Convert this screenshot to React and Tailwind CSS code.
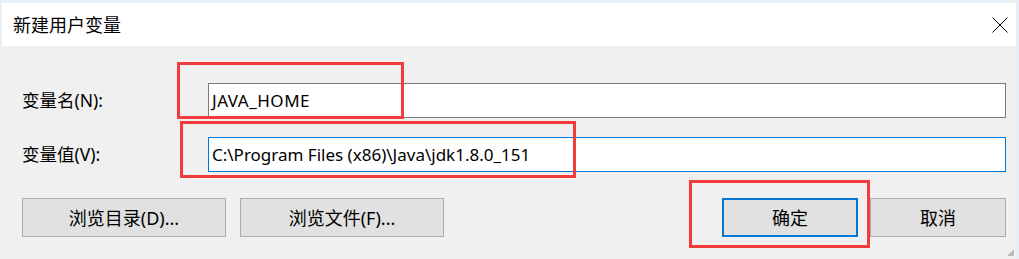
export default function App() {
  const font = { fontFamily: '"Noto Sans", "Noto Sans CJK SC", sans-serif' };
  return (
    <div className="relative w-[1019px] h-[259px] bg-[#e9eff7] overflow-hidden" style={font}>
      <div className="absolute left-[2px] top-[3px] right-[3px] bottom-0 flex flex-col">
        {/* title bar */}
        <div className="h-[43px] bg-white flex items-center justify-between pl-[11px] pr-[7px]">
          <span className="text-[18px] text-black leading-none">新建用户变量</span>
          <svg width="16" height="16" viewBox="0 0 16 16" className="mr-[1px]">
            <path d="M0.5 0.5 L15.5 15.5 M15.5 0.5 L0.5 15.5" stroke="#000" strokeWidth="1" fill="none" />
          </svg>
        </div>
        {/* body */}
        <div className="flex-1 bg-[#f0f0f0] relative flex flex-col pl-[20px] pr-[10px] pt-[37px] text-[17px] text-black">
          <div className="flex items-center h-[35px]">
            <span className="w-[186px] leading-none text-[17.5px]">变量名(N):</span>
            <div className="flex-1 h-[35px] bg-white border border-[#7a7a7a] flex items-center pl-[3px] leading-none tracking-[0.5px]">
              JAVA_HOME
            </div>
          </div>
          <div className="flex items-center h-[35px] mt-[19px]">
            <span className="w-[186px] leading-none text-[17.5px]">变量值(V):</span>
            <div className="flex-1 h-[35px] bg-white border border-[#0078d7] flex items-center pl-[3px] leading-none">
              C:\Program Files (x86)\Java\jdk1.8.0_151
            </div>
          </div>
          <div className="flex items-center mt-[26px] h-[39px]">
            <button className="w-[204px] h-[39px] bg-[#e1e1e1] border border-[#adadad] leading-none text-[18px]">浏览目录(D)...</button>
            <button className="w-[204px] h-[39px] bg-[#e1e1e1] border border-[#adadad] ml-[14px] leading-none text-[18px]">浏览文件(F)...</button>
            <div className="flex-1" />
            <button className="w-[136px] h-[39px] bg-[#e1e1e1] border-2 border-[#0078d7] leading-none text-[18px]">确定</button>
            <button className="w-[136px] h-[39px] bg-[#e1e1e1] border border-[#adadad] ml-[12px] leading-none text-[18px]">取消</button>
          </div>
          {/* resize grip */}
          <svg width="6" height="6" viewBox="0 0 6 6" className="absolute right-[2px] bottom-[3px]">
            <rect x="4" y="0" width="2" height="2" fill="#bcbcbc" />
            <rect x="2" y="2" width="2" height="2" fill="#bcbcbc" />
            <rect x="4" y="2" width="2" height="2" fill="#bcbcbc" />
            <rect x="0" y="4" width="2" height="2" fill="#bcbcbc" />
            <rect x="2" y="4" width="2" height="2" fill="#bcbcbc" />
            <rect x="4" y="4" width="2" height="2" fill="#bcbcbc" />
          </svg>
        </div>
      </div>
      {/* red highlight boxes */}
      <div className="absolute left-[177px] top-[62px] w-[227px] h-[57px] border-[3px] border-[#f03c3c] pointer-events-none" />
      <div className="absolute left-[180px] top-[121px] w-[396px] h-[57px] border-[3px] border-[#f03c3c] pointer-events-none" />
      <div className="absolute left-[689px] top-[180px] w-[181px] h-[68px] border-[3px] border-[#f03c3c] pointer-events-none" />
    </div>
  );
}
